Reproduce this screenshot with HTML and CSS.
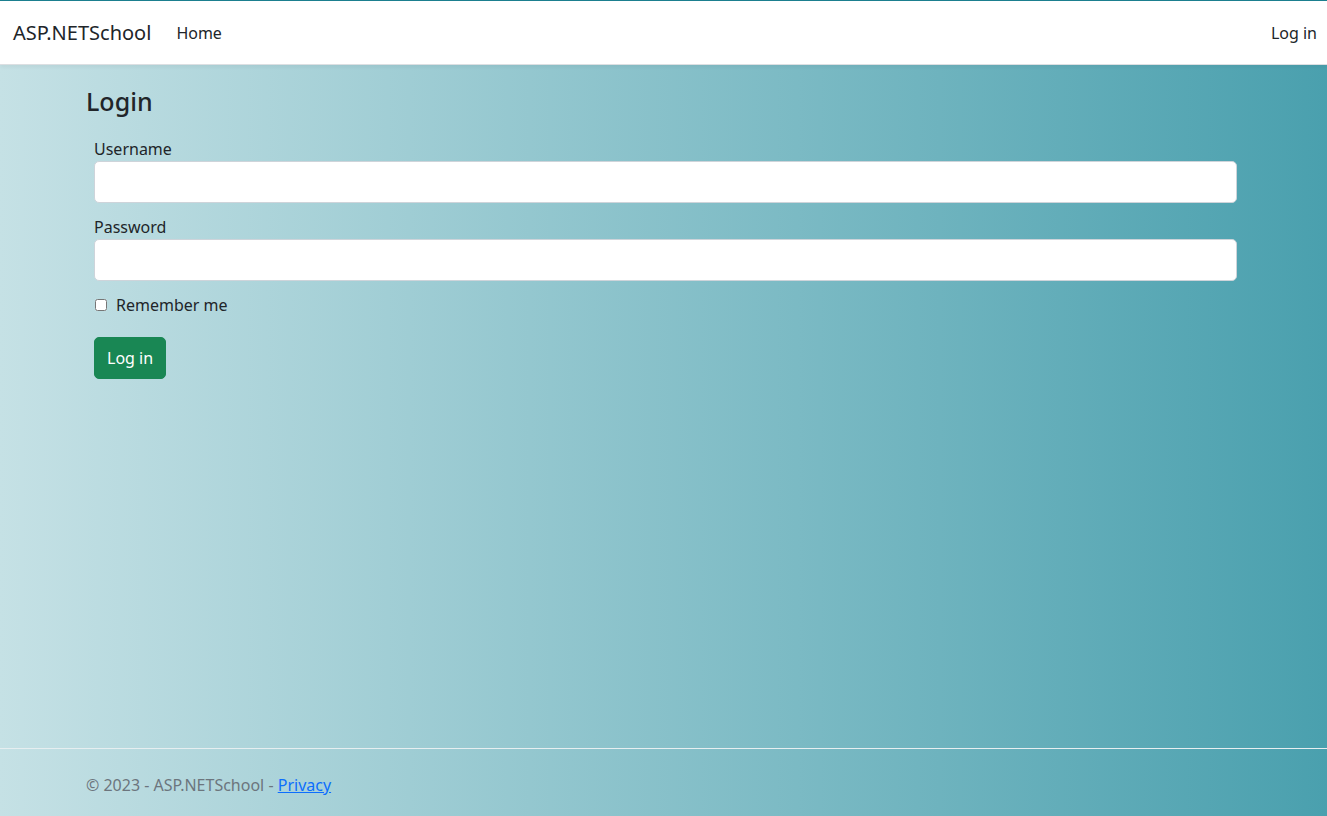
FILE: index.html
```html
<!DOCTYPE html>
<html lang="en">
<head>
<meta charset="utf-8">
<title>Log in - ASP.NETSchool</title>
<link rel="stylesheet" href="styles.css">
</head>
<body>
<header class="navbar">
  <a class="brand" href="#">ASP.NETSchool</a>
  <nav class="nav-left"><a class="nav-link" href="#">Home</a></nav>
  <nav class="nav-right"><a class="nav-link" href="#">Log in</a></nav>
</header>
<main class="page">
  <div class="container">
    <h2 class="title">Login</h2>
    <form class="login-form">
      <div class="field">
        <label class="label" for="u">Username</label>
        <input class="input" id="u" type="text">
      </div>
      <div class="field">
        <label class="label" for="p">Password</label>
        <input class="input" id="p" type="password">
      </div>
      <div class="check">
        <input class="checkbox" id="r" type="checkbox">
        <label class="check-label" for="r">Remember me</label>
      </div>
      <button class="btn" type="button">Log in</button>
    </form>
  </div>
</main>
<footer class="footer">
  <div class="container">© 2023 - ASP.NETSchool - <a class="footer-link" href="#">Privacy</a></div>
</footer>
</body>
</html>
```
FILE: styles.css
```css
* { box-sizing: border-box; }
html, body { height: 100%; }
body {
  margin: 0;
  font-family: "Noto Sans", "Open Sans", sans-serif;
  color: #212529;
  font-size: 16px;
  display: flex;
  flex-direction: column;
  background: linear-gradient(to right, #c5e1e5, #4aa0ae);
}
.navbar {
  height: 65px;
  background: #fff;
  border-top: 1px solid #1b7f8f;
  border-bottom: 1px solid #dcdfe2;
  display: flex;
  align-items: center;
  padding: 0 10px 0 13px;
  box-shadow: 0 2px 4px rgba(0,0,0,0.05);
}
.brand {
  font-size: 20px;
  color: #212529;
  text-decoration: none;
  margin-right: 25px;
  letter-spacing: 0;
}
.nav-link {
  color: #212529;
  text-decoration: none;
  font-size: 16px;
}
.nav-left { flex: 1; }
.page { flex: 1; }
.container {
  padding: 0 90px 0 86px;
}
.title {
  font-size: 25px;
  font-weight: 500;
  margin: 20px 0 20px;
  line-height: 32px;
}
.login-form { padding-left: 8px; }
.field { margin-bottom: 12px; }
.label {
  display: block;
  line-height: 24px;
  font-size: 16px;
}
.input {
  display: block;
  width: 100%;
  height: 42px;
  border: 1px solid #ced4da;
  border-radius: 5px;
  background: #fff;
  font-size: 16px;
}
.check {
  display: flex;
  align-items: center;
  margin-top: 12px;
  height: 24px;
}
.checkbox {
  margin: 0 9px 0 1px;
  width: 12px;
  height: 12px;
}
.check-label { font-size: 16px; }
.btn {
  margin-top: 20px;
  height: 42px;
  padding: 0 12px;
  background: #198754;
  color: #fff;
  border: 1px solid #198754;
  border-radius: 5px;
  font-family: inherit;
  font-size: 16px;
}
.footer {
  border-top: 1px solid #e6eef0;
  height: 68px;
  display: flex;
  align-items: center;
  color: #6c757d;
  font-size: 16px;
}
.footer .container { padding-top: 4px; }
.footer-link { color: #0d6efd; }
```
